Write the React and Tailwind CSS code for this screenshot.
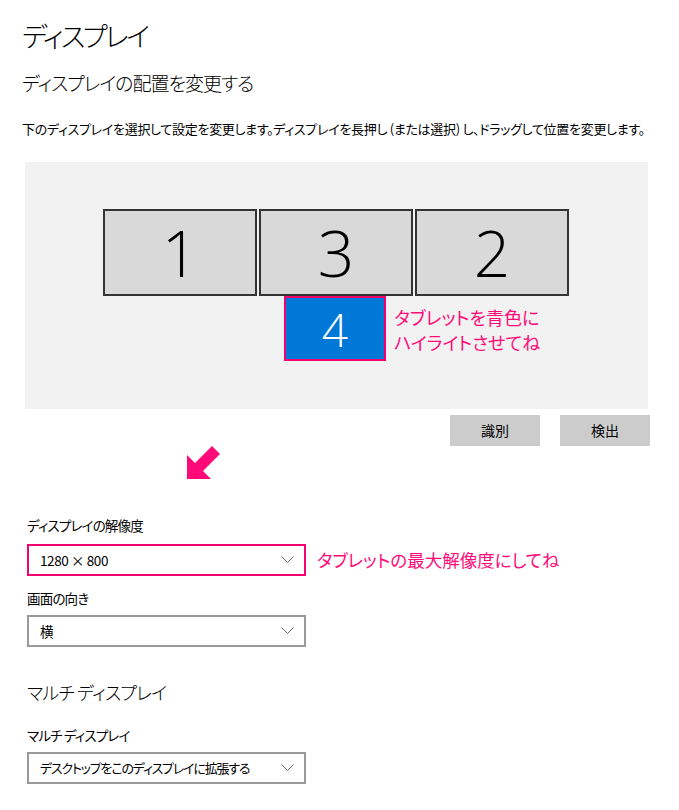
const font = "font-['Noto_Sans_CJK_JP',sans-serif] [font-feature-settings:'palt']";

const Chevron = () => (
    <svg className="w-[13px] h-[8px]" viewBox="0 0 13 8" fill="none" stroke="#666" strokeWidth="1">
        <polyline points="0.5,0.5 6.5,6.5 12.5,0.5"/>
    </svg>
)

const Select = ({value, highlight, tight}) => (
    <div
        className={`w-[279px] h-[32px] flex items-center justify-between pl-[11px] pr-[10px] border-2 bg-white ${highlight ? "border-[#f5006f]" : "border-[#999]"}`}>
        <span className={`text-black leading-5 whitespace-nowrap ${tight ? "text-[13px] tracking-[-1.2px]" : "text-[13.5px] tracking-[-0.4px]"}`}>{value}</span>
        <Chevron/>
    </div>
)

const Monitor = ({n}) => (
    <div
        className="w-[154px] h-[87px] border-2 border-[#333] bg-[#d9d9d9] flex items-center justify-center">
        <span className="font-['Open_Sans',sans-serif] font-light text-[64px] leading-none text-black">{n}</span>
    </div>
)

const App = () => {
    return (
        <div className={`${font} w-[679px] h-[810px] bg-white text-black overflow-hidden`}>
            <div className="pl-[22px] pt-[18px]">
                <h1 className="text-[27px] tracking-[-2.6px] leading-9 font-light">ディスプレイ</h1>
                <h2 className="text-[19px] tracking-[-1px] leading-7 font-light mt-[15px]">ディスプレイの配置を変更する</h2>
                <p className="text-[13px] tracking-[-0.3px] leading-5 mt-[22px] whitespace-nowrap">
                    下のディスプレイを選択して設定を変更します。ディスプレイを長押し (または選択) し、ドラッグして位置を変更します。
                </p>
            </div>

            <div className="ml-[25px] mt-[23px] w-[623px] h-[247px] bg-[#f2f2f2] pt-[47px] pl-[78px]">
                <div className="flex gap-[2px]">
                    <Monitor n="1"/>
                    <Monitor n="3"/>
                    <Monitor n="2"/>
                </div>
                <div className="flex ml-[181px]">
                    <div className="w-[102px] h-[65px] border-2 border-[#f5006f] bg-[#0078d7] flex items-center justify-center">
                        <span className="font-['Open_Sans',sans-serif] font-light text-[46px] leading-none text-white">4</span>
                    </div>
                    <div className="ml-[8px] mt-[9px] text-[18px] leading-[25px] text-[#ff0a78]">
                        <div>タブレットを青色に</div>
                        <div>ハイライトさせてね</div>
                    </div>
                </div>
            </div>

            <div className="flex justify-end gap-[20px] w-[650px] mt-[6px]">
                <button className="w-[90px] h-[31px] bg-[#cccccc] text-[14px]">識別</button>
                <button className="w-[90px] h-[31px] bg-[#cccccc] text-[14px]">検出</button>
            </div>

            <svg className="ml-[185px] mt-[-3px]" width="38" height="38" viewBox="0 0 38 38">
                <polygon points="2,36 2,12 10,20 27,3 35,11 18,28 26,36" fill="#ff0a78"/>
            </svg>

            <div className="pl-[27px]">
                <div className="text-[13.5px] tracking-[-0.8px] leading-5 mt-[34px]">ディスプレイの解像度</div>
                <div className="flex items-center mt-[9px]">
                    <Select value="1280 × 800" highlight/>
                    <span className="ml-[11px] text-[17.5px] text-[#ff0a78]">タブレットの最大解像度にしてね</span>
                </div>
                <div className="text-[13.5px] tracking-[-0.8px] leading-5 mt-[12px]">画面の向き</div>
                <div className="mt-[7px]">
                    <Select value="横"/>
                </div>
                <h2 className="text-[18px] tracking-[-0.8px] leading-7 font-light mt-[31px]">マルチ ディスプレイ</h2>
                <div className="text-[13.5px] tracking-[-0.8px] leading-5 mt-[19px]">マルチ ディスプレイ</div>
                <div className="mt-[7px]">
                    <Select value="デスクトップをこのディスプレイに拡張する" tight/>
                </div>
            </div>
        </div>
    )
}

export default App;
